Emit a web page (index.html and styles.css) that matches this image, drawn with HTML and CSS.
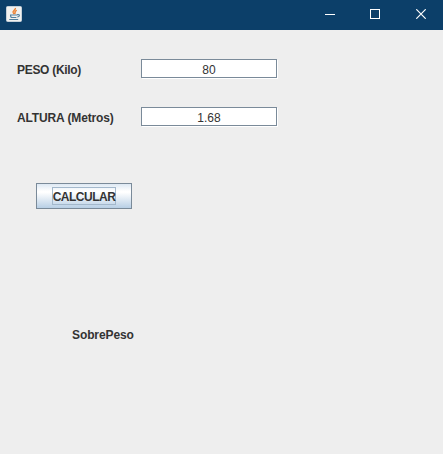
FILE: index.html
```html
<!DOCTYPE html>
<html lang="es">
<head>
<meta charset="utf-8">
<title>IMC</title>
<link rel="stylesheet" href="styles.css">
</head>
<body>
<div class="window">
  <header class="titlebar">
    <svg class="app-icon" width="16" height="16" viewBox="0 0 16 16">
      <rect x=".5" y=".5" width="15" height="15" rx="1" fill="#f1f1ef" stroke="#c5d0d8"/>
      <path d="M9.4 2C10 4 6 4.6 7.2 6.6L8.2 8M10.8 4.4C8.4 5.2 8.8 6.2 9.2 6.8L8.6 8" fill="none" stroke="#ee8130" stroke-width="1.4"/>
      <path d="M4 9H11.4M4.6 9.3C4.6 11.6 5.6 11.5 6 11.5H10.4M3.2 13.5H12.2M11.2 8.6C14.4 8 13.8 10.8 11.2 11" fill="none" stroke="#54809d" stroke-width="1.2"/>
    </svg>
    <nav class="controls">
      <svg width="10" height="11" viewBox="0 0 10 11"><path d="M0 5.5H10" class="stroke crisp"/></svg>
      <svg width="10" height="10" viewBox="0 0 10 10"><rect x=".5" y=".5" width="9" height="9" class="stroke crisp"/></svg>
      <svg class="close" width="10" height="10" viewBox="0 0 10 10"><path d="M.3.3L9.7 9.7M9.7.3L.3 9.7" class="stroke"/></svg>
    </nav>
  </header>
  <main class="form">
    <div class="row">
      <label class="label" for="peso">PESO (Kilo)</label>
      <input class="field" id="peso" value="80">
    </div>
    <div class="row">
      <label class="label label-wide" for="altura">ALTURA (Metros)</label>
      <input class="field" id="altura" value="1.68">
    </div>
    <button class="button"><span class="focus">CALCULAR</span></button>
    <output class="result">SobrePeso</output>
  </main>
</div>
</body>
</html>
```
FILE: styles.css
```css
* { box-sizing: border-box; }
body {
  margin: 0;
  background: #eee;
  color: #333;
  font: bold 12px/16px "Liberation Sans", Arial, sans-serif;
  overflow: hidden;
}
.window { height: 454px; }
.titlebar {
  height: 30px;
  padding: 0 17px 2px 6px;
  display: flex;
  align-items: center;
  justify-content: space-between;
  background: #0c3f69;
}
.app-icon { display: block; }
.controls { display: flex; align-items: center; gap: 35px; }
.controls svg { display: block; }
.controls .close { margin-left: 1px; }
.stroke { fill: none; stroke: #fff; stroke-width: 1; }
.close .stroke { stroke-width: 1.2; }
.crisp { shape-rendering: crispEdges; }
.form { padding: 29px 0 0 17px; }
.row {
  display: flex;
  align-items: center;
  height: 19px;
  margin-bottom: 29px;
}
.label {
  width: 124px;
  padding-top: 2px;
  white-space: nowrap;
  letter-spacing: -.3px;
}
.label-wide { letter-spacing: -.13px; }
.field {
  width: 136px;
  height: 19px;
  margin: 0;
  padding: 2px 0 0;
  border: 1px solid #7a8a99;
  border-radius: 0;
  outline: none;
  background: #fff;
  box-shadow: 1px 1px 0 #fff;
  color: #333;
  font: 12px/16px "Liberation Sans", Arial, sans-serif;
  text-align: center;
}
.button {
  display: flex;
  align-items: center;
  justify-content: center;
  width: 96px;
  height: 26px;
  margin: 57px 0 0 19px;
  padding: 0;
  border: 1px solid #7a8a99;
  border-radius: 0;
  background: linear-gradient(#dde8f3 0%, #fff 30%, #fff 35%, #b8cfe5 100%);
  color: #333;
  font: inherit;
}
.focus {
  width: 64px;
  height: 18px;
  border: 1px solid #a3b8cc;
  display: flex;
  justify-content: center;
  line-height: 18px;
  letter-spacing: -.5px;
}
.result {
  display: block;
  margin: 118px 0 0 55px;
  letter-spacing: -.1px;
}
```
